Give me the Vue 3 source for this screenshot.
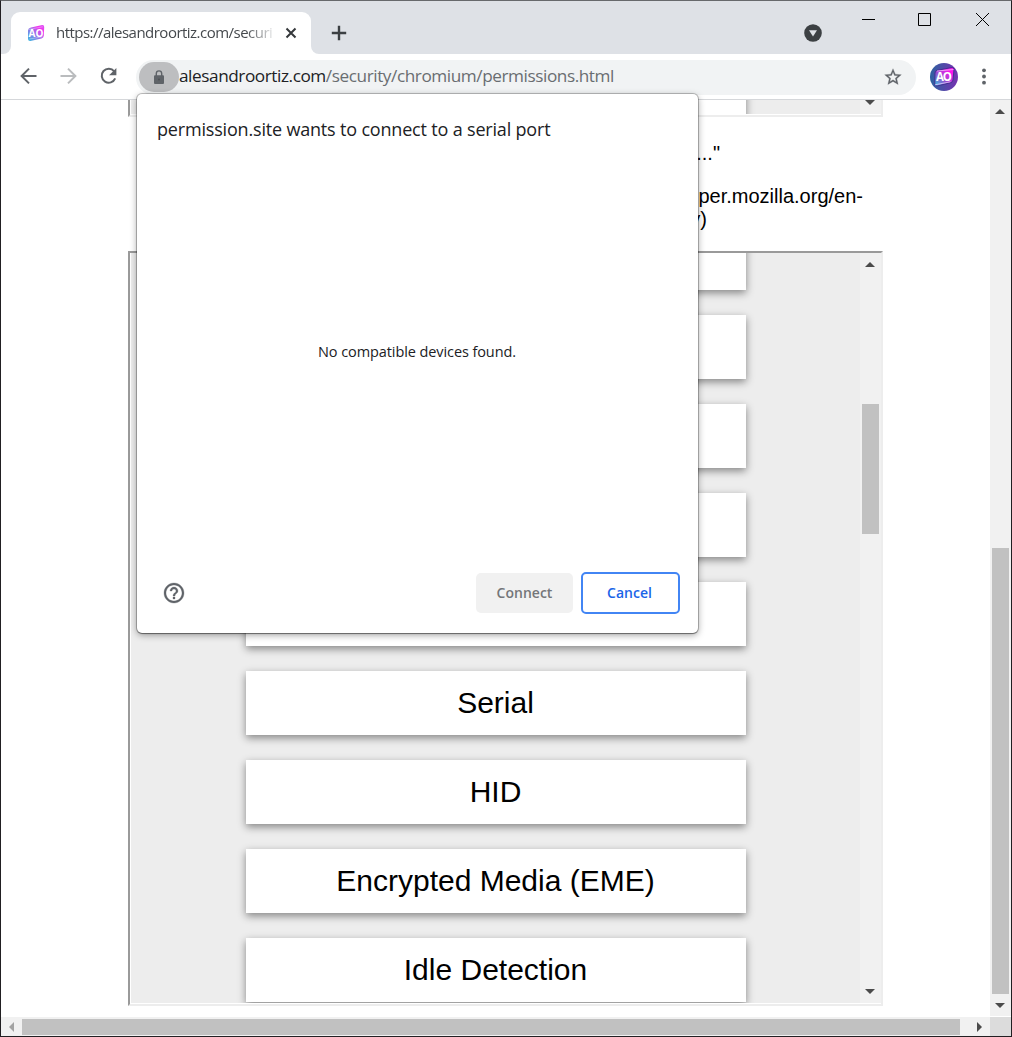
<script setup>
const hiddenLabels = ['', '', '', '', '']
const labels = [...hiddenLabels, 'Serial', 'HID', 'Encrypted Media (EME)', 'Idle Detection']
</script>

<template>
  <div class="window">
    <header class="titlebar">
      <div class="foot left"></div>
      <div class="tab">
        <svg class="favicon" width="18" height="18" viewBox="0 0 18 18">
          <defs>
            <linearGradient id="fav" x1="0" y1="1" x2="1" y2="0">
              <stop offset="0" stop-color="#35bde0" />
              <stop offset=".5" stop-color="#a268ea" />
              <stop offset=".75" stop-color="#f531ef" />
              <stop offset="1" stop-color="#d457f5" />
            </linearGradient>
          </defs>
          <path d="M4 3.4 15.2 1Q17.3.8 17.2 3L16.8 11.8Q16.6 14 14.5 14.5L3.5 17Q1.2 17.3 1 15L1 6.500Q1.2 4 4 3.4Z" fill="url(#fav)" />
          <path d="M2 5.4 15.8 2.8M2.5 15 15.5 12.8" stroke="#fff" stroke-width=".6" opacity=".6" />
          <text x="9" y="12.6" text-anchor="middle" textLength="15" class="logo" font-size="10">AO</text>
        </svg>
        <span class="tab-title">https://alesandroortiz.com/securi</span>
        <svg class="close" width="12" height="12" viewBox="0 0 12 12"><path d="m1.500 1.500 9 9m0-9-9 9" stroke="#35383b" stroke-width="2" /></svg>
      </div>
      <div class="foot right"></div>
      <svg class="plus" width="16" height="16" viewBox="0 0 16 16"><path d="M8 .8v14.4M.8 8h14.4" stroke="#3c4043" stroke-width="2.4" /></svg>
      <div class="spacer"></div>
      <svg class="search" width="18" height="18" viewBox="0 0 18 18"><circle cx="9" cy="9" r="8.8" fill="#3c4043" /><path d="M5 6.200h8L9 12.400Z" fill="#dee1e6" /></svg>
      <svg class="controls" width="130" height="15" viewBox="0 0 130 15" fill="none" stroke="#000">
        <path d="M1 7.500h13M57.500 1.500h12v12h-12zM115 1l13 13m0-13-13 13" />
      </svg>
    </header>

    <nav class="toolbar">
      <svg class="tool-icons" width="102" height="20" viewBox="0 0 102 20" fill="none" stroke-width="2">
        <path d="M17.500 10H2.700M10 2.600 2.600 10l7.400 7.400" stroke="#5f6368" />
        <path d="M41.500 10h14.800M49 2.600l7.400 7.400-7.400 7.400" stroke="#babcbe" />
        <path d="M95.200 5.300A7 7 0 1 0 96.200 12.400" stroke="#5f6368" />
        <path d="M97.400 2v7.300h-7.300Z" fill="#5f6368" />
      </svg>
      <div class="omnibox">
        <div class="lock">
          <svg width="12" height="16" viewBox="0 0 12 16"><rect x="1" y="6.300" width="10" height="8.700" rx="1" fill="#5f6368" /><path d="M3.300 7V4.600a2.700 2.700 0 0 1 5.400 0V7" fill="none" stroke="#5f6368" stroke-width="1.400" /><circle cx="6" cy="10.500" r="1" fill="#4d5054" /></svg>
        </div>
        <span class="url"><b>alesandroortiz.com</b>/security/chromium/permissions.html</span>
        <svg class="star" width="20" height="20" viewBox="0 0 24 24"><path fill="#5f6368" stroke="#5f6368" stroke-width=".3" d="m22 9.240-7.190-.620L12 2 9.190 8.630 2 9.240l5.460 4.730L5.820 21 12 17.270 18.180 21l-1.630-7.030L22 9.240zM12 15.400l-3.760 2.270 1-4.280-3.320-2.880 4.380-.380L12 6.100l1.710 4.040 4.380.380-3.320 2.880 1 4.280L12 15.400z" /></svg>
      </div>
      <svg class="avatar" width="28" height="28" viewBox="0 0 28 28">
        <defs>
          <linearGradient id="disc" x1="0" y1=".5" x2="1" y2=".5"><stop offset="0" stop-color="#2c629f" /><stop offset="1" stop-color="#7631b1" /></linearGradient>
          <linearGradient id="badge" x1="0" y1="1" x2="1" y2="0"><stop offset="0" stop-color="#35c6df" /><stop offset=".4" stop-color="#9151cf" /><stop offset=".8" stop-color="#ff13ed" /></linearGradient>
        </defs>
        <circle cx="14" cy="14" r="14" fill="url(#disc)" />
        <path d="M7 7.300 22 4.500Q24.200 4.300 24 6.500L23 17Q22.800 19 21 19.600L7 23Q4.800 23.200 4.800 21L5 10Q5.100 7.700 7 7.300Z" fill="url(#badge)" stroke="#452d91" />
        <path d="M7 8 23.500 6.500M5 21.800 20.500 18.800" stroke="#f2cfff" stroke-width=".7" />
        <text x="14" y="18" text-anchor="middle" textLength="16" class="logo" font-size="11.500">AO</text>
      </svg>
      <svg class="dots" width="6" height="18" viewBox="0 0 6 18" fill="#5f6368"><circle cx="3" cy="2.300" r="1.900" /><circle cx="3" cy="8.500" r="1.900" /><circle cx="3" cy="14.700" r="1.900" /></svg>
    </nav>

    <div class="view">
      <main class="page">
        <section class="frame top-frame">
          <div class="list"><div class="option"></div></div>
          <div class="bar"><i class="down"></i></div>
        </section>
        <div class="copy">
          <p class="first">..."</p>
          <p class="second">per.mozilla.org/en-</p>
          <p class="third">y)</p>
        </div>
        <section class="frame main-frame">
          <div class="list"><div v-for="(label, i) in labels" :key="i" class="option">{{ label }}</div></div>
          <div class="bar"><i class="up"></i><div class="thumb"></div><i class="down"></i></div>
        </section>
      </main>
      <div class="bar page-bar"><i class="up"></i><div class="thumb"></div><i class="down"></i></div>
    </div>
    <footer class="hbar"><i class="prev"></i><div class="hthumb"></div><i class="next"></i><div class="corner"></div></footer>

    <div class="dialog">
      <h1><span>permission.site wants to connect to a serial port</span></h1>
      <div class="empty"><span>No compatible devices found.</span></div>
      <div class="actions">
        <svg width="24" height="24" viewBox="0 0 24 24"><path fill="#5f6368" stroke="#5f6368" stroke-width=".3" d="M11 18h2v-2h-2v2zm1-16C6.480 2 2 6.480 2 12s4.480 10 10 10 10-4.480 10-10S17.520 2 12 2zm0 18c-4.410 0-8-3.590-8-8s3.590-8 8-8 8 3.590 8 8-3.590 8-8 8zm0-14c-2.210 0-4 1.790-4 4h2c0-1.100.9-2 2-2s2 .9 2 2c0 2-3 1.750-3 5h2c0-2.250 3-2.500 3-5 0-2.210-1.790-4-4-4z" /></svg>
        <div class="spacer"></div>
        <button class="connect">Connect</button>
        <button class="cancel">Cancel</button>
      </div>
    </div>
  </div>
</template>

<style>
body { margin: 0; overflow: hidden; }
</style>

<style scoped>
* { box-sizing: border-box; }
.window { position: relative; width: 1012px; height: 1037px; display: flex; flex-direction: column; border: 1px solid #211f22; border-top-color: #67696c; background: #fff; font-family: "Open Sans", "Noto Sans", sans-serif; }
.window svg { flex: none; display: block; }
.spacer { flex: 1; }
.logo { font-family: "Open Sans", sans-serif; font-weight: 700; fill: #fff; }
.titlebar { height: 53px; flex: none; display: flex; background: #dee1e6; }
.foot { width: 10px; background: #fff; }
.foot::before { content: ""; display: block; height: 53px; background: #dee1e6; }
.foot.left::before { border-bottom-right-radius: 8px; }
.foot.right::before { border-bottom-left-radius: 8px; }
.tab { width: 300px; height: 42px; margin-top: 11px; display: flex; align-items: center; background: #fff; border-radius: 9px 9px 0 0; }
.favicon { margin-left: 16px; }
.tab-title { width: 220px; margin: -2px 0 0 11px; font-size: 15px; line-height: 24px; letter-spacing: -.52px; white-space: nowrap; overflow: hidden; color: #45494d; -webkit-mask-image: linear-gradient(90deg, #000 190px, transparent 221px); mask-image: linear-gradient(90deg, #000 190px, transparent 221px); }
.close { margin-left: 9px; }
.plus { margin: 24px 0 0 10px; }
.search { margin-top: 23px; }
.controls { margin: 11px 20px 0 39px; }
.toolbar { height: 46px; flex: none; display: flex; align-items: center; border-bottom: 1px solid #d5d7da; background: #fff; }
.tool-icons { margin: -1px 0 0 18px; }
.omnibox { width: 780px; height: 35px; margin-left: 15px; display: flex; align-items: center; background: #f1f3f4; border-radius: 18px; margin-top: 1px; }
.lock { width: 40px; height: 30px; margin-left: 3px; border-radius: 15px; background: #bdbec0; display: flex; align-items: center; justify-content: center; }
.url { flex: 1; font-size: 17.2px; letter-spacing: -.43px; color: #696d71; white-space: nowrap; line-height: 28px; margin-top: -2px; }
.url b { font-weight: 400; color: #202124; }
.star { margin-right: 13px; }
.avatar { margin-left: 14px; }
.dots { margin-left: 23px; }
.view { height: 917px; flex: none; display: flex; }
.page { width: 989px; padding-left: 127px; }
.frame { width: 755px; border: 2px solid; border-color: #9a9a9a #ededed #ededed #9a9a9a; display: flex; background: #ededed; box-shadow: inset 1px -1px #fff; overflow: hidden; }
.top-frame { height: 17px; border-top: 0; }
.main-frame { height: 755px; }
.list { width: 730px; padding-left: 116px; overflow: hidden; margin-bottom: 1px; }
.option { width: 500px; height: 64px; margin-bottom: 25px; background: #fff; box-shadow: 0 3px 8px rgba(0,0,0,.44); font: 30px/63px "Liberation Sans", sans-serif; text-align: center; color: #000; padding-right: 1px; }
.top-frame .option { margin-top: -40px; height: 100px; }
.main-frame .option:first-child { margin-top: -27px; }
.bar { width: 21px; flex: none; background: #f1f1f1; display: flex; flex-direction: column; align-items: center; margin-bottom: 1px; }
.bar i, .hbar i { width: 0; height: 0; border: solid transparent; }
.bar .up { border-width: 0 5px 5px; border-bottom-color: #4b4b4b; margin-right: 1px; }
.bar .down { border-width: 5px 5px 0; border-top-color: #4b4b4b; margin-right: 1px; }
.thumb { width: 17px; background: #c1c1c1; }
.main-frame .up { margin-top: 9px; }
.main-frame .thumb { margin-top: 137px; height: 130px; }
.main-frame .down { margin-top: 455px; }
.copy { height: 134px; padding-top: 25px; font: 20px/23px "Liberation Sans", sans-serif; color: #000; }
.copy p { margin: 0; text-align: right; }
.first { width: 592px; }
.copy .second { width: 735px; margin-top: 20px; }
.third { width: 579px; }
.page-bar .up { margin-top: 9px; }
.page-bar .thumb { margin-top: 434px; height: 446px; }
.page-bar .down { margin-top: 9px; }
.hbar { height: 19px; flex: none; display: flex; align-items: center; background: #f1f1f1; }
.hbar .prev { margin-left: 8px; border-width: 5px 5px 5px 0; border-right-color: #a3a3a3; }
.hthumb { width: 938px; height: 16px; margin-left: 8px; background: #c1c1c1; }
.hbar .next { margin-left: 17px; border-width: 5px 0 5px 5px; border-left-color: #4b4b4b; }
.corner { align-self: stretch; width: 21px; margin-left: auto; background: #dcdcdc; }
.dialog { position: absolute; left: 136px; top: 93px; width: 561px; height: 539px; padding: 21px 18px 19px 20px; display: flex; flex-direction: column; background: #fff; border-radius: 5px; box-shadow: 0 0 0 1px rgba(0,0,0,.22), 0 1px 1px rgba(0,0,0,.3), 0 2px 7px rgba(0,0,0,.38); color: #202124; }
h1 { margin: 0; font-size: 18px; line-height: 28px; font-weight: 400; letter-spacing: -.18px; white-space: nowrap; }
.empty { flex: 1; display: flex; justify-content: center; font-size: 14.5px; line-height: 20px; letter-spacing: -.09px; padding-top: 199px; padding-right: 3px; }
.actions { height: 42px; display: flex; align-items: center; }
.actions svg { margin-left: 5px; }
button { padding: 0; font: 600 14px/20px "Open Sans", sans-serif; border: 0; border-radius: 5px; }
.connect { width: 97px; height: 40px; color: #747679; background: #f1f1f1; margin-right: 8px; }
.cancel { width: 99px; height: 42px; padding-right: 2px; color: #1a65e8; border: 2px solid #4285f4; background: #fff; }
</style>
